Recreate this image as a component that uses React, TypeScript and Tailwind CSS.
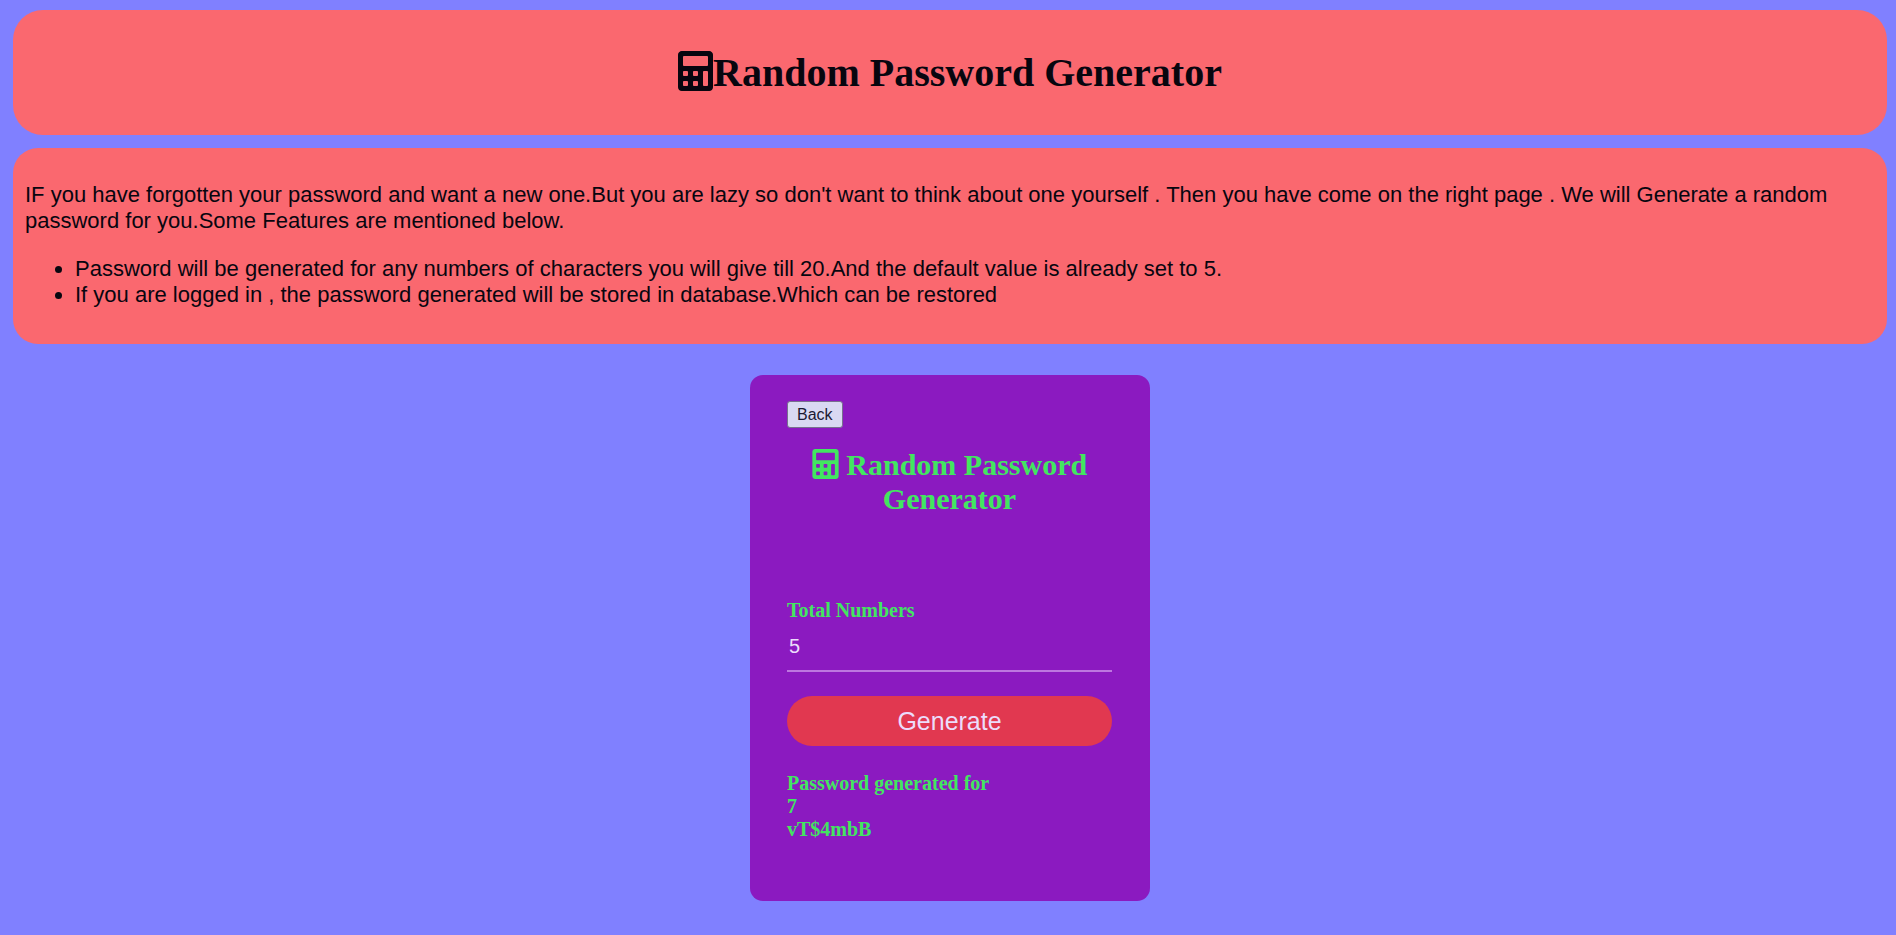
import { FaCalculator } from "react-icons/fa";

const features = [
  "Password will be generated for any numbers of characters you will give till 20.And the default value is already set to 5.",
  "If you are logged in , the password generated will be stored in database.Which can be restored",
];

export default function App() {
  return (
    <div className="flex min-h-screen flex-col bg-[#8080ff] px-[13px] pt-[10px] pr-[9px] font-['Liberation_Sans',Arial,sans-serif] text-[#08060f]">
      <header className="flex h-[125px] items-center justify-center rounded-[30px] bg-[#fa686f]">
        <h1 className="flex items-center font-['Liberation_Serif','Times_New_Roman',serif] text-[40px] leading-[46px] font-bold">
          <FaCalculator className="mb-[4px] h-[40px] w-[35px]" />
          Random Password Generator
        </h1>
      </header>

      <section className="mt-[13px] rounded-[25px] bg-[#fa686f] px-[12px] pt-[34px] pb-[36px] text-[22px] leading-[26px]">
        <p>
          IF you have forgotten your password and want a new one.But you are lazy so don't want to
          think about one yourself . Then you have come on the right page . We will Generate a
          random password for you.Some Features are mentioned below.
        </p>
        <ul className="mt-[22px] list-disc pl-[50px]">
          {features.map((feature) => (
            <li key={feature}>{feature}</li>
          ))}
        </ul>
      </section>

      <main className="mt-[31px] mb-[34px] flex w-[400px] flex-col self-center rounded-[13px] bg-[#8b1ac0] pt-[26px] pr-[38px] pb-[60px] pl-[37px] font-['Liberation_Serif','Times_New_Roman',serif] text-[#42e660]">
        <button
          type="button"
          className="h-[27px] self-start rounded-[3px] border border-[#77708f] bg-[#d9d9f2] px-[9px] font-['Liberation_Sans',Arial,sans-serif] text-[16px] leading-[22px] text-[#1c1a33]"
        >
          Back
        </button>
        <h2 className="mt-[20px] text-center text-[30px] leading-[34px] font-bold">
          <FaCalculator className="inline h-[30px] w-[27px] align-[-4px]" /> Random Password
          Generator
        </h2>
        <form className="mt-[83px] flex flex-col" onSubmit={(event) => event.preventDefault()}>
          <label htmlFor="total" className="text-[20px] leading-[23px] font-bold">
            Total Numbers
          </label>
          <input
            id="total"
            type="text"
            inputMode="numeric"
            defaultValue="5"
            className="h-[50px] border-b-2 border-[#bd76e0] bg-transparent px-[2px] font-['Liberation_Sans',Arial,sans-serif] text-[20px] text-[#ecdcfb] outline-none"
          />
          <button
            type="submit"
            className="mt-[24px] h-[50px] rounded-[25px] bg-[#e13850] font-['Liberation_Sans',Arial,sans-serif] text-[25px] leading-[28px] text-[#ecdcfb]"
          >
            Generate
          </button>
        </form>
        <div className="mt-[26px] text-[20px] leading-[23px] font-bold">
          <p>Password generated for</p>
          <p>7</p>
          <p>vT$4mbB</p>
        </div>
      </main>
    </div>
  );
}
